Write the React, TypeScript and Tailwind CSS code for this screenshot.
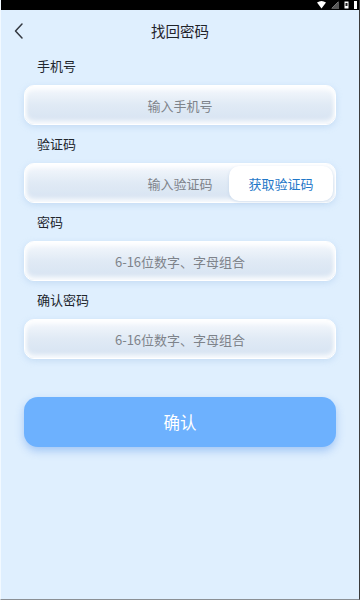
import React from "react";

const font = { fontFamily: '"Noto Sans CJK SC", "Noto Sans", sans-serif' };

function Field({ placeholder, children }: { placeholder: string; children?: React.ReactNode }) {
  return (
    <div className="relative ml-[23px] mr-[23px] h-10 rounded-[10px] border-[1.5px] border-white bg-gradient-to-b from-[#f6f9fd] via-[#e0eaf5] to-[#d6e3f2] shadow-[inset_0_3px_5px_rgba(255,255,255,0.95),inset_0_-3px_5px_rgba(255,255,255,0.9),0_2px_6px_rgba(150,185,225,0.35)] flex items-center justify-center">
      <span className="text-[13px] text-[#7e838a] leading-none">{placeholder}</span>
      {children}
    </div>
  );
}

function Label({ text }: { text: string }) {
  return <div className="h-5 pl-[36px] text-[13px] leading-5 text-[#22262d] mb-[9px]">{text}</div>;
}

export default function App() {
  return (
    <div style={font} className="w-[360px] h-[600px] bg-[#dfeffe] flex flex-col border-r border-[#3a3a3a] border-b border-b-[#8a8f94] border-l border-l-[#f2f9ff] overflow-hidden">
      <div className="h-[10px] bg-black flex items-center justify-end pr-[2px] gap-[5px] shrink-0">
        <svg width="9" height="8" viewBox="0 0 9 8"><path d="M0 1.5 Q4.5 -1.5 9 1.5 L4.5 7.5 Z" fill="#fff" /></svg>
        <svg width="8" height="8" viewBox="0 0 8 8"><path d="M8 0 V8 H0 Z" fill="#555" /><path d="M7 1 L1 7" stroke="#888" strokeWidth="0.8" /></svg>
        <svg width="5" height="8" viewBox="0 0 5 8"><rect x="0.5" y="0.5" width="4" height="7" fill="#fff" /><rect x="1.5" y="2" width="2" height="3" fill="#222" /></svg>
        <div className="w-[3px] h-[8px] bg-white" />
      </div>
      <div className="relative h-[42px] flex items-center justify-center shrink-0">
        <svg className="absolute left-[11px] top-[12px]" width="13" height="18" viewBox="0 0 13 18">
          <path d="M10 2 L3.5 9 L10 16" fill="none" stroke="#333840" strokeWidth="1.5" strokeLinecap="round" strokeLinejoin="round" />
        </svg>
        <span className="text-[14.5px] text-[#1f232a] leading-none">找回密码</span>
      </div>
      <div className="pt-1 flex flex-col">
        <Label text="手机号" />
        <Field placeholder="输入手机号" />
        <div className="h-[9px]" />
        <Label text="验证码" />
        <Field placeholder="输入验证码">
          <div className="absolute right-[2px] top-[1.5px] bottom-[1.5px] w-[104px] rounded-[10px] bg-white shadow-[0_1px_3px_rgba(150,180,215,0.35)] flex items-center justify-center">
            <span className="text-[13px] text-[#1f78c8] leading-none">获取验证码</span>
          </div>
        </Field>
        <div className="h-[9px]" />
        <Label text="密码" />
        <Field placeholder="6-16位数字、字母组合" />
        <div className="h-[9px]" />
        <Label text="确认密码" />
        <Field placeholder="6-16位数字、字母组合" />
        <div className="h-[38px]" />
        <div className="ml-[23px] mr-[23px] h-[50px] rounded-[14px] bg-[#6db1fe] shadow-[0_4px_8px_rgba(90,150,235,0.45)] flex items-center justify-center">
          <span className="text-[16.5px] text-white leading-none">确认</span>
        </div>
      </div>
    </div>
  );
}
